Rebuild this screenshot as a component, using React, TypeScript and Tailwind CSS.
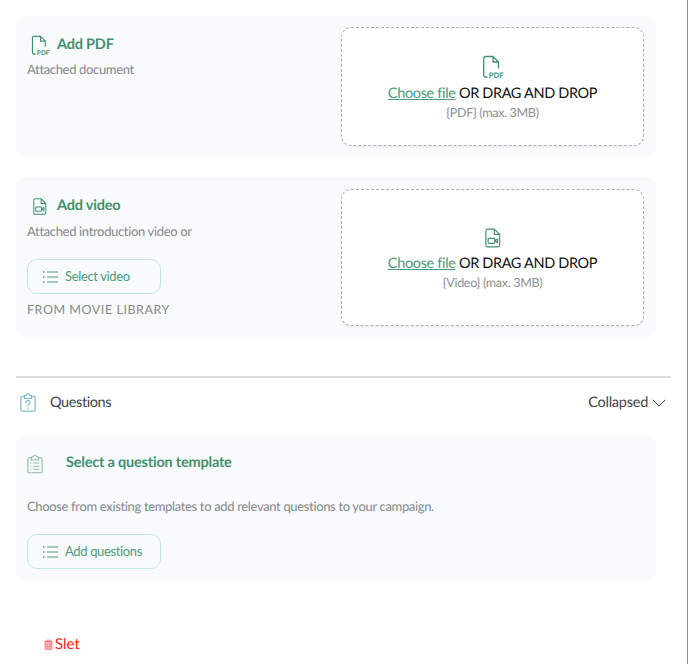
import { ChevronDown } from "lucide-react";

const GREEN = "#3f9070";

function PdfIcon({ className }: { className?: string }) {
  return (
    <svg viewBox="0 0 22 24" className={className} fill="none">
      <path
        d="M5.500 22H3.500A1.800 1.800 0 0 1 1.700 20.200V3.300A1.800 1.800 0 0 1 3.500 1.500H11L16.500 7V13.500"
        stroke={GREEN}
        strokeWidth="1.300"
        strokeLinejoin="round"
      />
      <path d="M11 1.500V7H16.500" stroke={GREEN} strokeWidth="1.300" strokeLinejoin="round" />
      <text x="6.800" y="22.500" fontSize="7.500" fontWeight="700" fill={GREEN} fontFamily="Lato, sans-serif">
        PDF
      </text>
    </svg>
  );
}

function VideoIcon({ className }: { className?: string }) {
  return (
    <svg viewBox="0 0 18 22" className={className} fill="none" stroke={GREEN} strokeWidth="1.300" strokeLinejoin="round">
      <path d="M3 1H10.500L16.500 7V19A2 2 0 0 1 14.500 21H3A2 2 0 0 1 1 19V3A2 2 0 0 1 3 1Z" />
      <path d="M10.500 1V7H16.500" />
      <rect x="3.500" y="11.500" width="7.500" height="5.500" rx="1" />
      <path d="M11 14L14 12.200V16.300L11 14.500" />
    </svg>
  );
}

function QuestionIcon() {
  return (
    <svg viewBox="0 0 18 23" className="-mt-[2px] h-[22px] w-[16px]" fill="none" stroke="#6fafc9" strokeWidth="1.200" strokeLinejoin="round">
      <path d="M5 5H2.500A1.500 1.500 0 0 0 1 6.500V20.500A1.500 1.500 0 0 0 2.500 22H15.500A1.500 1.500 0 0 0 17 20.500V6.500A1.500 1.500 0 0 0 15.500 5H13" />
      <path d="M5 7.500V4.500L7.500 3.500C7.800 1.500 10.200 1.500 10.500 3.500L13 4.500V7.500Z" />
      <path d="M6.500 12C6.500 9 11.500 9 11.500 12C11.500 14 9 14 9 16.200" strokeLinecap="round" />
      <path d="M9 18.500V19.300" strokeLinecap="round" />
    </svg>
  );
}

function ClipboardIcon() {
  return (
    <svg viewBox="0 0 18 23" className="h-[21px] w-[16px]" fill="none" stroke="#8dbba8" strokeWidth="1.200" strokeLinejoin="round">
      <path d="M5 5H2.500A1.500 1.500 0 0 0 1 6.500V20.500A1.500 1.500 0 0 0 2.500 22H15.500A1.500 1.500 0 0 0 17 20.500V6.500A1.500 1.500 0 0 0 15.500 5H13" />
      <path d="M5 7.500V4.500L7.500 3.500C7.800 1.500 10.200 1.500 10.500 3.500L13 4.500V7.500Z" />
      <path d="M4 11H5M7 11H14M4 14.500H5M7 14.500H14M4 18H5M7 18H14" />
    </svg>
  );
}

function TrashIcon() {
  return (
    <svg viewBox="0 0 10 12" className="h-[11px] w-[9px]" fill="#ffb3b3" stroke="#ff5a5a" strokeWidth="0.800">
      <path d="M0.500 2.500H9.500M3.500 2.500V1H6.500V2.500" fill="none" />
      <path d="M1.200 2.500H8.800V10.500A1 1 0 0 1 7.800 11.500H2.200A1 1 0 0 1 1.200 10.500Z" />
      <path d="M3.500 5V9.500M6.500 5V9.500" fill="none" />
    </svg>
  );
}

function ListIcon() {
  return (
    <svg viewBox="0 0 15 12" className="h-[12px] w-[15px]" fill="none" stroke="#4c9a7a" strokeWidth="1.100">
      <path d="M4 1H15M4 6H15M4 11H15" />
      <path d="M0 1H1.500M0 6H1.500M0 11H1.500" strokeWidth="1.500" />
    </svg>
  );
}

function OutlineButton({ label }: { label: string }) {
  return (
    <button
      type="button"
      className="flex h-[35px] w-[134px] items-center gap-[7px] rounded-[10px] border-[1.500px] border-[#bfe8d8] pl-[15px] text-[13px] tracking-[-0.35px] text-[#4c9a7a]"
    >
      <ListIcon />
      {label}
    </button>
  );
}

function DropZone({ icon, hint, height }: { icon: React.ReactNode; hint: string; height: string }) {
  return (
    <div
      className={`flex ${height} w-[303px] flex-col items-center justify-center rounded-[10px] border border-dashed border-[#b0b0b0] bg-white pt-[4px] shadow-[0_1px_2px_rgba(0,0,0,0.08)]`}
    >
      {icon}
      <p className="mt-[5px] text-[14.500px] leading-[20px] tracking-[-0.35px] text-[#111]">
        <span className="text-[#4c9a7a] underline">Choose file</span> OR DRAG AND DROP
      </p>
      <p className="text-[12.500px] leading-[18px] tracking-[-0.3px] text-[#8a8f94]">{hint}</p>
    </div>
  );
}

export default function App() {
  return (
    <div
      className="relative h-[664px] w-[688px] overflow-hidden border-r border-[#8a8a8a] bg-white pt-[16px] pl-[16px] [text-rendering:geometricPrecision]"
      style={{ fontFamily: "Lato, sans-serif" }}
    >
      {/* Add PDF */}
      <section className="flex h-[141px] w-[640px] justify-between rounded-[10px] bg-[#f9fafc] pt-[11px] pr-[12px] pl-[11px]">
        <div>
          <div className="mt-[6px] flex items-center gap-[7px] pl-[4px]">
            <PdfIcon className="h-[21px] w-[19px]" />
            <h3 className="text-[14.500px] leading-[24px] font-bold tracking-[-0.2px] text-[#3f9070]">Add PDF</h3>
          </div>
          <p className="text-[13px] leading-[24px] tracking-[-0.34px] text-[#85898d]">Attached document</p>
        </div>
        <DropZone icon={<PdfIcon className="h-[24px] w-[22px]" />} hint="{PDF} (max. 3MB)" height="h-[119px]" />
      </section>

      {/* Add video */}
      <section className="mt-[20px] flex h-[160px] w-[640px] justify-between rounded-[10px] bg-[#f9fafc] pt-[12px] pr-[12px] pl-[11px]">
        <div>
          <div className="mt-[5px] flex items-center gap-[10px] pl-[6px]">
            <VideoIcon className="h-[19px] w-[14px]" />
            <h3 className="text-[14.500px] leading-[24px] font-bold tracking-[-0.2px] text-[#3f9070]">Add video</h3>
          </div>
          <p className="mt-[1px] text-[13px] leading-[24px] tracking-[-0.34px] text-[#85898d]">
            Attached introduction video or
          </p>
          <div className="mt-[16px]">
            <OutlineButton label="Select video" />
          </div>
          <p className="mt-[6px] text-[12.500px] leading-[20px] tracking-[0.55px] text-[#85898d]">FROM MOVIE LIBRARY</p>
        </div>
        <DropZone icon={<VideoIcon className="h-[22px] w-[16px]" />} hint="{Video} (max. 3MB)" height="h-[137px]" />
      </section>

      {/* Questions */}
      <div className="mt-[39px] w-[655px] border-t-2 border-[#dedede]">
        <div className="flex h-[50px] items-center justify-between pl-[4px]">
          <div className="flex items-center gap-[14px]">
            <QuestionIcon />
            <span className="text-[14.500px] tracking-[-0.4px] text-[#3d4347]">Questions</span>
          </div>
          <div className="flex items-center">
            <span className="text-[14.500px] tracking-[-0.25px] text-[#3d4347]">Collapsed</span>
            <ChevronDown className="-ml-[1px] h-[24px] w-[24px] text-[#3d4347]" strokeWidth={1} />
          </div>
        </div>
      </div>

      <section className="mt-[7px] h-[146px] w-[640px] rounded-[10px] bg-[#f9fafc] pt-[16px] pl-[11px]">
        <div className="flex items-center gap-[23px]">
          <ClipboardIcon />
          <h3 className="text-[14.500px] leading-[24px] font-bold tracking-[-0.2px] text-[#3f9070]">
            Select a question template
          </h3>
        </div>
        <p className="mt-[19px] text-[13px] leading-[24px] tracking-[-0.34px] text-[#85898d]">
          Choose from existing templates to add relevant questions to your campaign.
        </p>
        <div className="mt-[16px]">
          <OutlineButton label="Add questions" />
        </div>
      </section>

      <div className="mt-[52px] flex items-center gap-[2px] pl-[28px] text-[15px] leading-[22px] text-[#ff2020]">
        <TrashIcon />
        Slet
      </div>
    </div>
  );
}
